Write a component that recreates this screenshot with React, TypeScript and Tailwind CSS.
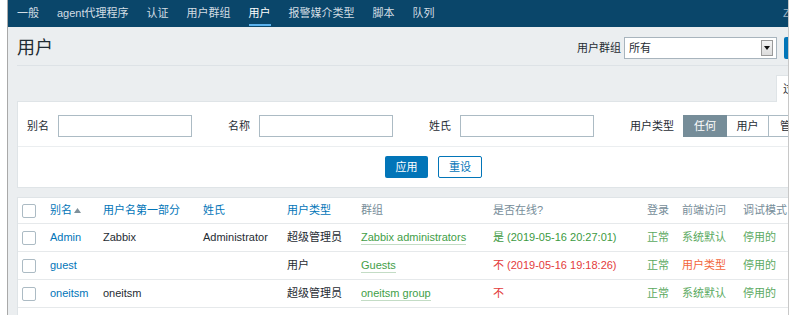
import React from "react";

type Row = {
  alias: string;
  name: string;
  surname: string;
  type: string;
  group: string;
  online: string;
  onlineOk: boolean;
  frontend: string;
  frontendWarn: boolean;
};

const rows: Row[] = [
  {
    alias: "Admin",
    name: "Zabbix",
    surname: "Administrator",
    type: "超级管理员",
    group: "Zabbix administrators",
    online: "是 (2019-05-16 20:27:01)",
    onlineOk: true,
    frontend: "系统默认",
    frontendWarn: false,
  },
  {
    alias: "guest",
    name: "",
    surname: "",
    type: "用户",
    group: "Guests",
    online: "不 (2019-05-16 19:18:26)",
    onlineOk: false,
    frontend: "用户类型",
    frontendWarn: true,
  },
  {
    alias: "oneitsm",
    name: "oneitsm",
    surname: "",
    type: "超级管理员",
    group: "oneitsm group",
    online: "不",
    onlineOk: false,
    frontend: "系统默认",
    frontendWarn: false,
  },
];

const navItems = ["一般", "agent代理程序", "认证", "用户群组", "用户", "报警媒介类型", "脚本", "队列"];

function Checkbox() {
  return <div className="h-[14px] w-[14px] rounded-[2px] border border-[#acbbc4] bg-white" />;
}

export default function App() {
  return (
    <div className="relative flex h-[315px] w-[791px] overflow-hidden whitespace-nowrap bg-white font-['Liberation_Sans','Noto_Sans_CJK_SC',sans-serif] text-[11px] text-[#1f2c33]">
      <div className="w-[7px] shrink-0 bg-white" />
      <div className="w-px shrink-0 bg-[#a9a9a9]" />
      <div className="w-[780px] shrink-0 overflow-hidden bg-[#ebeef0]">
        {/* top navigation */}
        <nav className="flex h-[27px] items-stretch bg-[#0a466a]">
          {navItems.map((item) => {
            const active = item === "用户";
            return (
              <div
                key={item}
                className={`relative flex shrink-0 items-center px-[9px] ${active ? "text-white" : "text-[#d3dde4]"}`}
              >
                {item}
                {active && <span className="absolute bottom-[1px] left-[9px] right-[9px] h-[2px] bg-[#5ab1ec]" />}
              </div>
            );
          })}
          <div className="flex-1" />
          <div className="-mr-[35px] flex w-[40px] shrink-0 items-center text-[#9fb3c2]">Zabbix</div>
        </nav>

        <div className="pl-[9px]">
          {/* page header */}
          <div className="flex h-[39px] items-center border-b border-[#dde2e6] pt-[4px]">
            <h1 className="shrink-0 text-[18px] leading-none text-[#1f2c33]">用户</h1>
            <div className="flex-1" />
            <span className="mr-[3px] shrink-0">用户群组</span>
            <div className="flex h-[22px] w-[153px] shrink-0 items-center border border-[#a8b4bd] bg-white pl-[4px]">
              <span className="flex-1">所有</span>
              <div className="mr-[3px] flex h-[16px] w-[12px] items-center justify-center border border-[#9a9a9a] bg-gradient-to-b from-[#f4f4f4] to-[#dcdcdc]">
                <svg width="6" height="4" viewBox="0 0 6 4">
                  <path d="M0 0 L6 0 L3 4 Z" fill="#111" />
                </svg>
              </div>
            </div>
            <div className="-mr-[56px] ml-[7px] flex h-[22px] w-[60px] shrink-0 items-center rounded-[2px] bg-[#0275b8] pl-[8px] text-white">
              创建用户
            </div>
          </div>

          {/* filter tab */}
          <div className="flex pt-[9px]">
            <div className="relative z-10 -mb-px ml-[759px] flex h-[27px] w-[70px] shrink-0 items-center border border-b-0 border-[#dfe4e7] bg-white pl-[6px]">
              过滤器
            </div>
          </div>

          {/* filter box */}
          <div className="w-[833px] border border-[#dfe4e7] bg-white">
            <div className="flex items-center pb-[9px] pl-[9px] pt-[13px]">
              <span className="shrink-0">别名</span>
              <div className="ml-[9px] h-[22px] w-[134px] shrink-0 border border-[#acbbc4] bg-white" />
              <span className="ml-[36px] shrink-0">名称</span>
              <div className="ml-[9px] h-[22px] w-[134px] shrink-0 border border-[#acbbc4] bg-white" />
              <span className="ml-[36px] shrink-0">姓氏</span>
              <div className="ml-[9px] h-[22px] w-[134px] shrink-0 border border-[#acbbc4] bg-white" />
              <span className="ml-[36px] shrink-0">用户类型</span>
              <div className="ml-[9px] flex h-[22px] shrink-0">
                <div className="flex w-[44px] items-center justify-center bg-[#768d99] text-white">任何</div>
                <div className="flex w-[42px] items-center justify-center border-y border-r border-[#acbbc4]">用户</div>
                <div className="flex w-[56px] items-center justify-center border-y border-r border-[#acbbc4]">管理员</div>
                <div className="flex w-[70px] items-center justify-center border-y border-r border-[#acbbc4]">超级管理员</div>
              </div>
            </div>
            <div className="flex justify-center gap-[10px] border-t border-[#ebeef0] pb-[9px] pt-[9px]">
              <div className="flex h-[22px] w-[43px] items-center justify-center rounded-[2px] bg-[#0275b8] text-white">应用</div>
              <div className="flex h-[22px] w-[44px] items-center justify-center rounded-[2px] border border-[#0275b8] bg-white text-[#0275b8]">重设</div>
            </div>
          </div>

          {/* users table */}
          <div className="mt-[9px] w-[833px] border border-[#dfe4e7] bg-white">
            <div className="grid h-[26px] grid-cols-[32px_53px_100px_84px_74px_132px_154px_35px_61px_90px] items-center border-b border-[#e6e9eb]">
              <div className="pl-[4px]">
                <Checkbox />
              </div>
              <div className="flex items-center text-[#0275b8]">
                别名
                <svg className="ml-[2px]" width="7" height="5" viewBox="0 0 7 5">
                  <path d="M0 5 L3.5 0 L7 5 Z" fill="#7f909a" />
                </svg>
              </div>
              <div className="text-[#0275b8]">用户名第一部分</div>
              <div className="text-[#0275b8]">姓氏</div>
              <div className="text-[#0275b8]">用户类型</div>
              <div className="text-[#768d99]">群组</div>
              <div className="text-[#768d99]">是否在线?</div>
              <div className="text-[#768d99]">登录</div>
              <div className="text-[#768d99]">前端访问</div>
              <div className="text-[#768d99]">调试模式</div>
            </div>
            {rows.map((r) => (
              <div
                key={r.alias}
                className="grid h-[28px] grid-cols-[32px_53px_100px_84px_74px_132px_154px_35px_61px_90px] items-center border-b border-[#e6e9eb]"
              >
                <div className="pl-[4px]">
                  <Checkbox />
                </div>
                <div className="text-[#0275b8]">{r.alias}</div>
                <div>{r.name}</div>
                <div>{r.surname}</div>
                <div>{r.type}</div>
                <div>
                  <span className="border-b border-[#c3dcc5] pb-[1px] text-[#429e47]">{r.group}</span>
                </div>
                <div className={r.onlineOk ? "text-[#3c9a42]" : "text-[#e33b3b]"}>{r.online}</div>
                <div className="text-[#5aa960]">正常</div>
                <div className={r.frontendWarn ? "text-[#f2653b]" : "text-[#5aa960]"}>{r.frontend}</div>
                <div className="text-[#5aa960]">停用的</div>
              </div>
            ))}
            <div className="h-[20px]" />
          </div>
        </div>
      </div>
      <div className="w-px shrink-0 bg-[#c8c8c8]" />
      <div className="flex-1 bg-white" />

      {/* watermark */}
      <div className="pointer-events-none absolute left-[523px] top-[310px] text-[16px] text-[#e2e2e2]">
        https://blog.csdn.net/weixin_44384088
      </div>
    </div>
  );
}
